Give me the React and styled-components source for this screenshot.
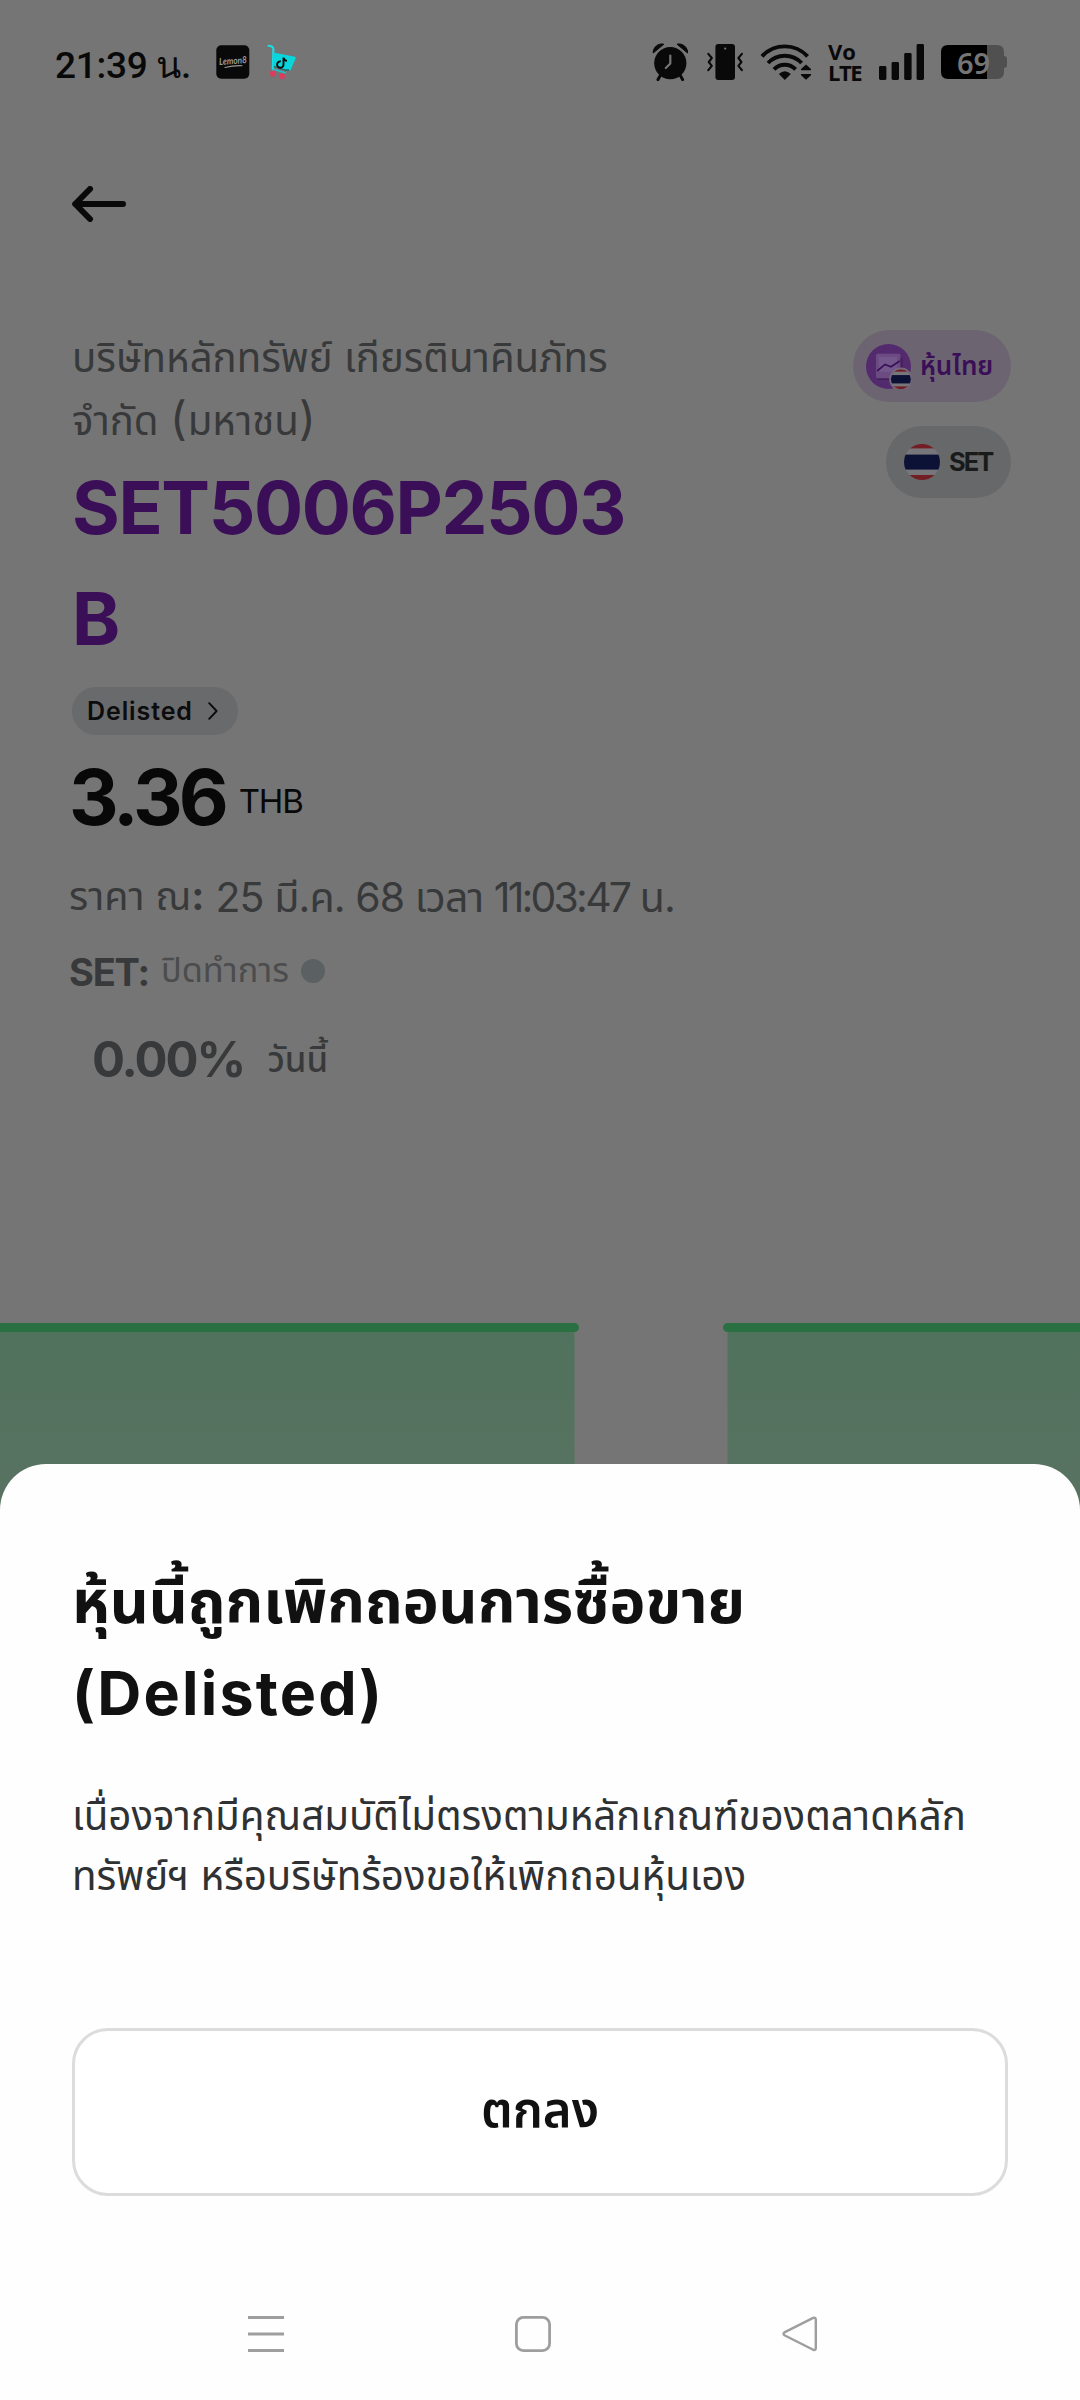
import React from 'react'
import styled, { createGlobalStyle } from 'styled-components'

const StatusBar = () => (
    <StStatusBar>
        <StClock>21:39 น.</StClock>
        <svg width="34" height="34" viewBox="0 0 34 34">
            <rect x="0.3" y="0.2" width="33" height="33.6" rx="5" fill="#090909" />
            <text x="3" y="19" fontFamily="Lato" fontSize="9.6" fontWeight="700" fontStyle="italic" fill="#9a9a9a" textLength="28" lengthAdjust="spacingAndGlyphs" transform="rotate(-4 17 17)">Lemon8</text>
            <path d="M9 22.5Q17 20.4 26 20.7" stroke="#9a9a9a" strokeWidth="1.1" fill="none" strokeLinecap="round" />
        </svg>
        <StCart width="30" height="36" viewBox="0 0 30 36">
            <path d="M1.5 1.8Q6.4 2 6.4 5.4L5.8 25.6" stroke="#18dfe6" strokeWidth="2.1" fill="none" strokeLinecap="round" />
            <path d="M6.5 8.6L28 12.8Q29.2 13.2 28.6 14.4L23.4 26.4L18 25.4L5.8 22.4Z" fill="#08d5dc" />
            <path d="M5.6 25L18.8 29" stroke="#18c4ca" strokeWidth="1.8" />
            <path d="M7 22.4L18.6 26H22" stroke="#186c70" strokeWidth="1.3" fill="none" />
            <circle cx="6" cy="29.6" r="3" fill="#dc3c60" />
            <circle cx="15" cy="32.2" r="3" fill="#dc3c60" />
            <path d="M16.5 13.6V20.6A3.2 3.2 0 1 1 13.8 17.4M16.5 13.6Q17.2 16.6 20 16.9" stroke="#070707" strokeWidth="1.9" fill="none" />
        </StCart>
        <StStatusRight>
            <svg width="38" height="38" viewBox="0 0 38 38">
                <circle cx="18.3" cy="20.2" r="16.1" fill="#090909" />
                <path d="M1.2 10A8.6 8.6 0 0 1 11.8 1.2ZM35.6 10A8.6 8.6 0 0 0 25 1.2Z" fill="#090909" stroke="#090909" strokeWidth="1" strokeLinejoin="round" />
                <path d="M8.6 32L6 36.6M28 32L30.6 36.6" stroke="#090909" strokeWidth="3" strokeLinecap="round" />
                <path d="M18.3 12.6V20.6L13.8 25" stroke="#757575" strokeWidth="2.2" fill="none" strokeLinecap="round" />
            </svg>
            <svg width="36" height="38" viewBox="0 0 36 38">
                <rect x="8.4" y="1" width="19.6" height="36" rx="3" fill="#090909" />
                <circle cx="18.2" cy="5.6" r="1.1" fill="#757575" />
                <path d="M1.3 10.8L4.8 15L1.8 19L4.8 22.8L1.3 27.2M34.9 10.8L31.4 15L34.4 19L31.4 22.8L34.9 27.2" stroke="#090909" strokeWidth="2.1" fill="none" strokeLinecap="round" strokeLinejoin="round" />
            </svg>
            <svg width="51" height="38" viewBox="0 0 51 38">
                <path d="M2 13.4A31 31 0 0 1 47.6 13.4M8 20A23 23 0 0 1 41.6 20M14 26.4A15 15 0 0 1 35.6 26.4" stroke="#090909" strokeWidth="3.9" fill="none" />
                <path d="M24.8 37L18.8 31Q24.8 25.6 30.8 31Z" fill="#090909" />
                <path d="M46 21.4L51 26V27.2H41V26ZM41 31H51V32.2L46 36.8L41 32.2Z" fill="#090909" />
            </svg>
            <StVolte>
                <span>Vo</span>
                <span>LTE</span>
            </StVolte>
            <svg width="45" height="38" viewBox="0 0 45 38">
                <rect x="0" y="23" width="7.4" height="14" rx="1.4" fill="#090909" />
                <rect x="12.6" y="19" width="7.4" height="18" rx="1.4" fill="#090909" />
                <rect x="25.2" y="10" width="7.4" height="27" rx="1.4" fill="#090909" />
                <rect x="37.6" y="1" width="7.4" height="36" rx="1.4" fill="#090909" />
            </svg>
            <StBattery>
                <svg width="66" height="34" viewBox="0 0 66 34">
                    <path d="M46 0H56Q63 0 63 7V11Q66 11 66 14V20Q66 23 63 23V27Q63 34 56 34H46Z" fill="#505050" />
                    <path d="M46 0H7Q0 0 0 7V27Q0 34 7 34H46Z" fill="#000" />
                </svg>
                <span>69</span>
            </StBattery>
        </StStatusRight>
    </StStatusBar>
)

const Stripes = ({ id }) => (
    <g clipPath={`url(#${id})`}>
        <clipPath id={id}><circle cx="18" cy="18" r="18" /></clipPath>
        <rect width="36" height="36" fill="#77767b" />
        <rect width="36" height="4.4" fill="#721e24" />
        <rect y="10.6" width="36" height="15" fill="#0c1136" />
        <rect y="31" width="36" height="5" fill="#721e24" />
    </g>
)

const ThaiStockIcon = () => (
    <svg width="45" height="45" viewBox="0 0 45 45">
        <circle cx="22.5" cy="22.5" r="22.5" fill="#542a6e" />
        <path d="M11.5 14H36.5V36H11.5Z" fill="#432058" />
        <rect x="10" y="9.8" width="24.4" height="24.4" rx="1.5" fill="#6c4a82" />
        <rect x="13" y="13" width="18" height="15" fill="#73568c" />
        <path d="M11.2 27L19 20.4L25 22.8L33.8 17" stroke="#3a1058" strokeWidth="1.7" fill="none" />
        <circle cx="34.8" cy="35.2" r="11.6" fill="#76687c" />
        <svg x="24.8" y="25.2" width="20.2" height="20" viewBox="0 0 36 36">
            <Stripes id="smallFlag" />
        </svg>
    </svg>
)

const App = () => {
    return (
        <StScreen>
            <GlobalStyle />
            <StatusBar />
            <StBack>
                <svg width="54" height="36" viewBox="0 0 54 36">
                    <path d="M3.2 18H51M18 3L3.2 18L18 33" stroke="#090909" strokeWidth="6" fill="none" strokeLinecap="round" strokeLinejoin="round" />
                </svg>
            </StBack>

            <StStock>
                <StInfo>
                    <StCompany>บริษัทหลักทรัพย์ เกียรตินาคินภัทร<br />จำกัด <span>(</span>มหาชน<span>)</span></StCompany>
                    <StSymbol>SET5006P2503<br />B</StSymbol>
                    <StDelisted>
                        Delisted
                        <svg width="10" height="18" viewBox="0 0 10 18">
                            <path d="M1.2 1.2L8.6 9L1.2 16.8" stroke="#0c0c0c" strokeWidth="1.9" fill="none" strokeLinecap="round" strokeLinejoin="round" />
                        </svg>
                    </StDelisted>
                    <StPriceRow>
                        <StPrice>3.36</StPrice>
                        <StUnit>THB</StUnit>
                    </StPriceRow>
                    <StDateRow>
                        <StDateLabel>ราคา ณ<b>:</b></StDateLabel>
                        <StDate>25 มี.ค. 68 เวลา <span>11:03:47</span> น.</StDate>
                    </StDateRow>
                    <StMarketRow>
                        <StMarket>SET:</StMarket>
                        <StMarketState>ปิดทำการ</StMarketState>
                        <StDot />
                    </StMarketRow>
                    <StChangeRow>
                        <StPercent>0.00%</StPercent>
                        <StPeriod>วันนี้</StPeriod>
                    </StChangeRow>
                </StInfo>
                <StBadges>
                    <StBadge $bg="#6d6472" $color="#3b0f57" $left={13}>
                        <ThaiStockIcon />
                        <StThaiName>หุ้นไทย</StThaiName>
                    </StBadge>
                    <StBadge $bg="#66686a" $color="#191b1b" $left={18}>
                        <svg width="36" height="36" viewBox="0 0 36 36">
                            <Stripes id="bigFlag" />
                        </svg>
                        <StSetName>SET</StSetName>
                    </StBadge>
                </StBadges>
            </StStock>

            <StChart width="1080" height="220" viewBox="0 0 1080 220">
                <defs>
                    <linearGradient id="area" x1="0" y1="0" x2="0" y2="1">
                        <stop offset="0" stopColor="#50725c" />
                        <stop offset="1" stopColor="#5b7263" />
                    </linearGradient>
                </defs>
                <rect x="0" y="5" width="574.5" height="215" fill="url(#area)" />
                <rect x="727.5" y="5" width="352.5" height="215" fill="url(#area)" />
                <path d="M-10 4.5H574.5M727.5 4.5H1090" stroke="#2b7043" strokeWidth="9" strokeLinecap="round" />
            </StChart>

            <StSheet>
                <StTitle>หุ้นนี้ถูกเพิกถอนการซื้อขาย<br /><span>(Delisted)</span></StTitle>
                <StText>เนื่องจากมีคุณสมบัติไม่ตรงตามหลักเกณฑ์ของตลาดหลัก<br />ทรัพย์ฯ หรือบริษัทร้องขอให้เพิกถอนหุ้นเอง</StText>
                <StButton type="button">ตกลง</StButton>
                <StNav>
                    <svg width="36" height="36" viewBox="0 0 36 36">
                        <path d="M0 1.5H36M0 18H36M0 34.5H36" stroke="#9e9e9e" strokeWidth="3" />
                    </svg>
                    <svg width="36" height="36" viewBox="0 0 36 36">
                        <rect x="1.4" y="1.4" width="33.2" height="33.2" rx="7" stroke="#9e9e9e" strokeWidth="2.8" fill="none" />
                    </svg>
                    <svg width="36" height="36" viewBox="0 0 36 36">
                        <path d="M31.2 1.9L2.4 16.4Q0.6 17.8 2.4 19.2L31.2 33.8Q33.8 34.6 33.8 32V3.8Q33.8 1.2 31.2 1.9Z" stroke="#9e9e9e" strokeWidth="2.4" fill="none" strokeLinejoin="round" />
                    </svg>
                </StNav>
            </StSheet>
        </StScreen>
    )
}

export default App

const GlobalStyle = createGlobalStyle`
    * {
        box-sizing: border-box;
    }
    body {
        margin: 0;
        background: #757575;
        font-family: "Inter", "Noto Sans Thai", sans-serif;
    }
    svg {
        display: block;
        flex-shrink: 0;
    }
`
const StScreen = styled.div`
    position: relative;
    width: 1080px;
    height: 2400px;
    overflow: hidden;
    display: flex;
    flex-direction: column;
    background: #757575;
    white-space: nowrap;
`
const StStatusBar = styled.div`
    height: 84px;
    padding: 40px 73px 0 55px;
    display: flex;
    align-items: center;
`
const StClock = styled.div`
    width: 161px;
    height: 44px;
    line-height: 52px;
    font-family: Roboto, sans-serif;
    font-size: 37px;
    font-weight: 500;
    letter-spacing: -0.3px;
    color: #090909;
`
const StCart = styled.svg`
    margin-left: 17px;
`
const StStatusRight = styled.div`
    margin-left: auto;
    display: flex;
    align-items: center;
    gap: 17px;
`
const StVolte = styled.div`
    width: 34px;
    height: 42px;
    display: flex;
    flex-direction: column;
    font-family: "Open Sans", "Noto Sans", sans-serif;
    font-size: 22px;
    font-weight: 700;
    line-height: 20.5px;
    color: #090909;
    span:last-child {
        letter-spacing: -1.5px;
    }
`
const StBattery = styled.div`
    position: relative;
    height: 34px;
    span {
        position: absolute;
        left: 16px;
        top: 0;
        line-height: 35px;
        font-family: "Noto Sans", sans-serif;
        font-size: 29px;
        font-weight: 600;
        color: #757575;
    }
`
const StBack = styled.div`
    height: 242px;
    padding: 102px 0 0 72px;
`
const StStock = styled.div`
    height: 997px;
    padding: 0 69px 0 72px;
    display: flex;
    justify-content: space-between;
    align-items: flex-start;
`
const StInfo = styled.div`
    display: flex;
    flex-direction: column;
    align-items: flex-start;
`
const StCompany = styled.div`
    font-size: 40.2px;
    line-height: 63px;
    color: #38393a;
    span {
        font-size: 46px;
        line-height: 0;
        letter-spacing: 1px;
    }
`
const StSymbol = styled.h1`
    margin: 0;
    font-size: 73px;
    line-height: 111px;
    font-weight: 750;
    letter-spacing: -1.4px;
    color: #3b0e58;
`
const StDelisted = styled.div`
    height: 48px;
    width: 166px;
    margin-top: 13px;
    padding: 0 20px 0 15px;
    display: flex;
    align-items: center;
    justify-content: space-between;
    border-radius: 24px;
    background: #696a6c;
    font-size: 25px;
    font-weight: 600;
    letter-spacing: 0.9px;
    color: #0c0c0c;
`
const StPriceRow = styled.div`
    height: 94px;
    margin: 15px 0 0 -3px;
    display: flex;
`
const StPrice = styled.div`
    font-size: 77px;
    line-height: 94px;
    font-weight: 750;
    letter-spacing: -4px;
    color: #080808;
`
const StUnit = styled.div`
    margin: 31px 0 0 14px;
    font-size: 33px;
    line-height: 40px;
    letter-spacing: -1.2px;
    color: #080808;
`
const StDateRow = styled.div`
    height: 63px;
    margin: 21px 0 0 -3px;
    display: flex;
    line-height: 63px;
    color: #38393a;
`
const StDateLabel = styled.div`
    font-size: 39.4px;
`
const StDate = styled.div`
    margin: 1px 0 0 11px;
    font-size: 41px;
    letter-spacing: -0.9px;
    span {
        letter-spacing: -2.8px;
    }
`
const StMarketRow = styled.div`
    height: 60px;
    margin: 13px 0 0 -3px;
    display: flex;
    align-items: center;
    line-height: 60px;
`
const StMarket = styled.div`
    margin-top: 1px;
    font-size: 38px;
    font-weight: 700;
    letter-spacing: -1.2px;
    color: #38393a;
`
const StMarketState = styled.div`
    margin: -2px 0 0 12px;
    font-size: 34.3px;
    color: #4b4c4d;
`
const StDot = styled.div`
    width: 24px;
    height: 24px;
    margin-left: 12px;
    border-radius: 50%;
    background: #5b6162;
`
const StChangeRow = styled.div`
    height: 70px;
    margin: 24px 0 0 20px;
    display: flex;
    line-height: 70px;
    color: #38393a;
`
const StPercent = styled.div`
    font-size: 49px;
    font-weight: 700;
    letter-spacing: -2px;
`
const StPeriod = styled.div`
    margin-left: 23px;
    margin-top: -1px;
    font-size: 34.8px;
    font-weight: 500;
`
const StBadges = styled.div`
    padding-top: 4px;
    display: flex;
    flex-direction: column;
    align-items: flex-end;
    gap: 24px;
`
const StBadge = styled.div`
    height: 72px;
    padding: 0 18px 0 ${p => p.$left}px;
    display: flex;
    align-items: center;
    gap: 9px;
    border-radius: 36px;
    background: ${p => p.$bg};
    color: ${p => p.$color};
    font-weight: 600;
    line-height: 72px;
`
const StThaiName = styled.div`
    width: 73px;
    font-size: 26px;
`
const StSetName = styled.div`
    width: 44px;
    font-size: 25.5px;
    font-weight: 700;
    letter-spacing: -2px;
`
const StChart = styled.svg`
    height: 220px;
    overflow: visible;
`
const StSheet = styled.div`
    position: absolute;
    left: 0;
    right: 0;
    bottom: 0;
    height: 936px;
    padding: 91px 72px 0;
    display: flex;
    flex-direction: column;
    border-radius: 46px 46px 0 0;
    background: #fefefe;
`
const StTitle = styled.h2`
    margin: 0;
    font-size: 60.5px;
    line-height: 92px;
    font-weight: 700;
    color: #111;
    span {
        font-size: 61px;
        letter-spacing: 2.2px;
    }
`
const StText = styled.p`
    margin: 47px 0 0;
    font-size: 40.3px;
    line-height: 60px;
    color: #303132;
`
const StButton = styled.button`
    height: 168px;
    width: 936px;
    margin-top: 122px;
    padding: 0;
    border: 3px solid #dcdcdc;
    border-radius: 36px;
    background: #fff;
    font-family: inherit;
    font-size: 49px;
    font-weight: 600;
    color: #111;
`
const StNav = styled.div`
    margin-top: 120px;
    padding-left: 176px;
    display: flex;
    gap: 231px;
`
